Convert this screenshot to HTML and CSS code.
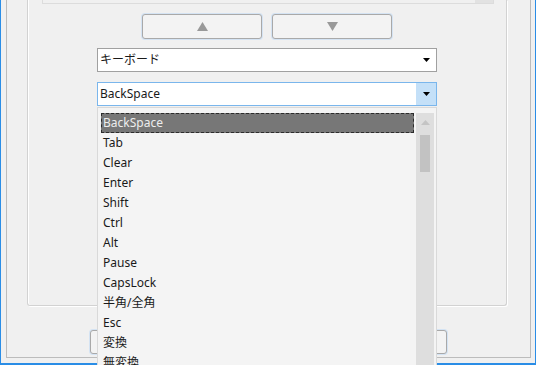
FILE: index.html
```html
<!DOCTYPE html>
<html lang="ja">
<head>
    <meta charset="UTF-8">
    <meta name="viewport" content="width=device-width, initial-scale=1.0">
    <title>キー設定</title>
    <link rel="stylesheet" href="styles.css">
</head>
<body>
    <div class="window">
        <div class="frame">
            <div class="panel">
                <div class="listbox">
                    <div class="listbox-scroll"></div>
                </div>

                <div class="move-row">
                    <button class="move-btn">
                        <svg width="11" height="9" viewBox="0 0 11 9"><polygon points="5.5,0 11,9 0,9" fill="#999"/></svg>
                    </button>
                    <button class="move-btn">
                        <svg width="11" height="9" viewBox="0 0 11 9"><polygon points="0,0 11,0 5.5,9" fill="#999"/></svg>
                    </button>
                </div>

                <div class="combo">
                    <span class="combo-text">キーボード</span>
                    <span class="combo-arrow">
                        <svg width="7" height="4" viewBox="0 0 7 4"><polygon points="0,0 7,0 3.5,4" fill="#000"/></svg>
                    </span>
                </div>

                <div class="combo combo-open">
                    <span class="combo-text">BackSpace</span>
                    <span class="combo-arrow">
                        <svg width="7" height="4" viewBox="0 0 7 4"><polygon points="0,0 7,0 3.5,4" fill="#000"/></svg>
                    </span>

                    <div class="dropdown">
                        <ul class="items">
                            <li class="item selected">BackSpace</li>
                            <li class="item">Tab</li>
                            <li class="item">Clear</li>
                            <li class="item">Enter</li>
                            <li class="item">Shift</li>
                            <li class="item">Ctrl</li>
                            <li class="item">Alt</li>
                            <li class="item">Pause</li>
                            <li class="item">CapsLock</li>
                            <li class="item">半角/全角</li>
                            <li class="item">Esc</li>
                            <li class="item">変換</li>
                            <li class="item">無変換</li>
                        </ul>
                        <div class="scrollbar">
                            <svg class="scroll-up" width="9" height="5" viewBox="0 0 9 5"><polygon points="4.5,0 9,5 0,5" fill="#c4c4c4"/></svg>
                            <div class="thumb"></div>
                        </div>
                    </div>
                </div>
            </div>

            <div class="bottom-row">
                <button class="dlg-btn">OK</button>
                <button class="dlg-btn">キャンセル</button>
            </div>
        </div>
    </div>
</body>
</html>
```

FILE: styles.css
```css
* {
    margin: 0;
    padding: 0;
    box-sizing: border-box;
}

body {
    width: 536px;
    height: 365px;
    overflow: hidden;
    background: #f0f0f0;
    font-family: 'Noto Sans', 'Noto Sans CJK JP', sans-serif;
    font-size: 12px;
    color: #1a1a1a;
}

.window {
    height: 365px;
    border-left: 1px solid #2a8de6;
    border-right: 1px solid #2a8de6;
    border-bottom: 2px solid #2a8de6;
    padding: 0 4px 0 5px;
}

.frame {
    height: 358px;
    border: 1px solid #bcbcbc;
    border-top: none;
}

.panel {
    position: relative;
    width: 480px;
    height: 306px;
    margin-left: 20px;
    border: 1px solid #d2d2d2;
    border-top: none;
    border-radius: 0 0 3px 3px;
    box-shadow: 1px 1px 0 #fff, inset 1px 0 0 #fff;
}

.listbox {
    display: flex;
    justify-content: flex-end;
    width: 452px;
    height: 4px;
    margin-left: 14px;
    background: #f0f0f0;
    border-left: 1px solid #dcdcdc;
    border-right: 1px solid #dcdcdc;
    border-bottom: 1px solid #dcdcdc;
}

.listbox-scroll {
    width: 18px;
    background: #e2e2e2;
}

.move-row {
    display: flex;
    gap: 10px;
    margin: 10px 0 0 114px;
}

.move-btn {
    display: flex;
    align-items: center;
    justify-content: center;
    width: 120px;
    height: 25px;
    background: #f3f3f3;
    border: 1px solid #a9a9a9;
    border-radius: 3px;
    box-shadow: 0 0 0 1px #d4e3f3;
}

.combo {
    position: relative;
    display: flex;
    align-items: center;
    width: 340px;
    height: 24px;
    margin: 9px 0 0 69px;
    background: #fff;
    border: 1px solid #a0a0a0;
}

.combo-open {
    margin-top: 10px;
    border-color: #7ab6ec;
}

.combo-text {
    flex: 1;
    padding-left: 2px;
    line-height: 22px;
}

.combo-arrow {
    display: flex;
    align-items: center;
    justify-content: center;
    width: 20px;
    height: 22px;
}

.combo-open .combo-arrow {
    background: #c4e0f8;
}

.dropdown {
    position: absolute;
    top: 24px;
    left: -1px;
    display: flex;
    width: 340px;
    height: 270px;
    padding: 5px 2px 0 3px;
    background: #f4f4f4;
    border: 1px solid #d9d9d9;
    z-index: 5;
}

.items {
    flex: 1;
    list-style: none;
}

.item {
    height: 20px;
    line-height: 20px;
    padding-left: 2px;
    white-space: nowrap;
}

.item.selected {
    background: #777;
    color: #ededed;
    border: 1px dashed #2c2c2c;
    line-height: 18px;
    padding-left: 1px;
    margin-right: 2px;
}

.scrollbar {
    display: flex;
    flex-direction: column;
    align-items: center;
    width: 18px;
    background: #dedede;
}

.scroll-up {
    margin-top: 7px;
}

.thumb {
    width: 10px;
    height: 37px;
    margin-top: 10px;
    background: #c2c2c2;
}

.bottom-row {
    display: flex;
    justify-content: space-between;
    width: 357px;
    margin: 24px 0 0 83px;
}

.dlg-btn {
    width: 110px;
    height: 24px;
    background: #f3f3f3;
    border: 1px solid #a9a9a9;
    border-radius: 3px;
    box-shadow: 0 0 0 1px #d4e3f3;
    font-family: 'Noto Sans', 'Noto Sans CJK JP', sans-serif;
    font-size: 12px;
}
```
